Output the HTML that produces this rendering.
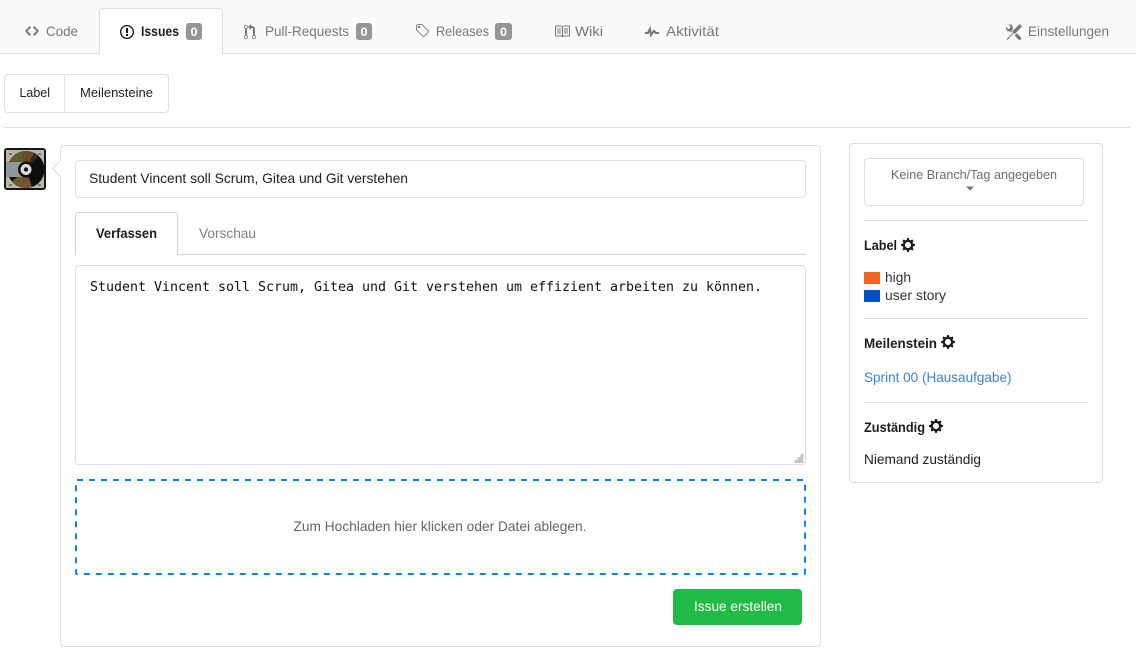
<!DOCTYPE html>
<html lang="de">
<head>
<meta charset="utf-8">
<title>Neues Issue</title>
<style>
html,body{margin:0;padding:0;background:#fff;width:1136px;height:658px;overflow:hidden}
svg{display:block;position:absolute;left:0;top:0}
text{font-family:"Liberation Sans",sans-serif;font-size:14px;fill:#212121}
.g{fill:#777}
.b{font-weight:bold;fill:#1b1c1d}
.mono{font-family:"DejaVu Sans Mono",monospace;font-size:13.33px;fill:#111}
</style>
</head>
<body>
<svg width="1136" height="658" viewBox="0 0 1136 658" xmlns="http://www.w3.org/2000/svg">
<defs>
<path id="gear" d="M14 8.77v-1.6l-1.94-.64-.45-1.09.88-1.84-1.13-1.13-1.81.91-1.09-.45-.69-1.92h-1.6l-.63 1.94-1.11.45-1.84-.88-1.13 1.13.91 1.81-.45 1.09L0 7.23v1.59l1.94.64.45 1.09-.88 1.84 1.13 1.13 1.81-.91 1.09.45.69 1.92h1.59l.63-1.94 1.11-.45 1.84.88 1.13-1.13-.92-1.81.47-1.09L14 8.75v.02zM7 11c-1.66 0-3-1.34-3-3s1.34-3 3-3 3 1.34 3 3-1.34 3-3 3z"/>
</defs>
<!-- tab bar -->
<rect x="0" y="0" width="1136" height="53" fill="#fafafa"/>
<rect x="0" y="53" width="1136" height="1" fill="#dedede"/>
<path d="M99.500 54V11.500a3 3 0 0 1 3-3h117a3 3 0 0 1 3 3V54" fill="#fff" stroke="#dedede"/>
<rect x="100" y="53" width="122" height="1" fill="#fff"/>

<path transform="translate(25 23)" fill="#767676" d="M9.5 3L8 4.5 11.5 8 8 11.5 9.5 13 14 8 9.5 3zm-5 0L0 8l4.5 5L6 11.5 2.5 8 6 4.5 4.5 3z"/>
<text class="g" x="46" y="36" textLength="32" lengthAdjust="spacingAndGlyphs">Code</text>

<path transform="translate(120 24)" fill="#111" d="M7 2.3c3.14 0 5.7 2.56 5.7 5.7s-2.56 5.7-5.7 5.7A5.71 5.71 0 0 1 1.3 8c0-3.14 2.56-5.7 5.7-5.700zM7 1C3.14 1 0 4.14 0 8s3.14 7 7 7 7-3.14 7-7-3.14-7-7-7zm1 3H6v5h2V4zm0 6H6v2h2v-2z"/>
<text class="b" x="141" y="36" textLength="38" lengthAdjust="spacingAndGlyphs">Issues</text>
<rect x="186" y="23" width="16" height="17" rx="3" fill="#969696"/>
<text x="190.500" y="36" style="font-size:12px;font-weight:bold;fill:#fff" textLength="7" lengthAdjust="spacingAndGlyphs">0</text>

<path transform="translate(244 24)" fill="#767676" d="M11 11.28V5c-.03-.78-.34-1.47-.94-2.06C9.46 2.35 8.78 2.03 8 2H7V0L4 3l3 3V4h1c.27.02.48.11.69.31.21.2.3.42.31.69v6.28A1.993 1.993 0 0 0 10 15a1.993 1.993 0 0 0 1-3.72zm-1 2.92c-.66 0-1.2-.55-1.2-1.2 0-.65.55-1.2 1.2-1.2.65 0 1.2.55 1.2 1.2 0 .65-.55 1.2-1.2 1.2zM4 3c0-1.11-.89-2-2-2a1.993 1.993 0 0 0-1 3.72v6.56A1.993 1.993 0 0 0 2 15a1.993 1.993 0 0 0 1-3.72V4.72c.59-.34 1-.98 1-1.72zm-.8 10c0 .66-.55 1.2-1.2 1.2-.65 0-1.2-.55-1.2-1.2 0-.65.55-1.2 1.2-1.2.65 0 1.2.55 1.2 1.2zM2 4.2C1.34 4.2.8 3.65.8 3c0-.65.55-1.2 1.2-1.2.65 0 1.2.55 1.2 1.2 0 .65-.55 1.2-1.2 1.2z"/>
<text class="g" x="265" y="36" textLength="84" lengthAdjust="spacingAndGlyphs">Pull-Requests</text>
<rect x="356" y="23" width="16" height="17" rx="3" fill="#969696"/>
<text x="360.500" y="36" style="font-size:12px;font-weight:bold;fill:#fff" textLength="7" lengthAdjust="spacingAndGlyphs">0</text>

<path transform="translate(415 23)" fill="#767676" d="M7.73 1.73C7.26 1.26 6.62 1 5.96 1H3.5C2.13 1 1 2.13 1 3.5v2.47c0 .66.27 1.3.73 1.77l6.06 6.06c.39.39 1.02.39 1.41 0l4.59-4.59a.996.996 0 0 0 0-1.41L7.73 1.73zM2.38 7.09c-.31-.3-.47-.7-.47-1.13V3.5c0-.88.72-1.59 1.59-1.59h2.47c.42 0 .83.16 1.13.47l6.14 6.13-4.73 4.73-6.13-6.15zM3.01 3h2v2H3V3h.01z"/>
<text class="g" x="436" y="36" textLength="53" lengthAdjust="spacingAndGlyphs">Releases</text>
<rect x="495" y="23" width="17" height="17" rx="3" fill="#969696"/>
<text x="500" y="36" style="font-size:12px;font-weight:bold;fill:#fff" textLength="7" lengthAdjust="spacingAndGlyphs">0</text>

<path transform="translate(554 23.500)" fill="#767676" d="M3 5h4v1H3V5zm0 3h4V7H3v1zm0 2h4V9H3v1zm11-5h-4v1h4V5zm0 2h-4v1h4V7zm0 2h-4v1h4V9zm2-6v9c0 .55-.45 1-1 1H9.5l-1 1-1-1H2c-.55 0-1-.45-1-1V3c0-.55.45-1 1-1h5.5l1 1 1-1H15c.55 0 1 .45 1 1zm-8 .5L7.5 3H2v9h6V3.5zm7-.5H9.5l-.5.5V12h6V3z"/>
<text class="g" x="575" y="36" textLength="28" lengthAdjust="spacingAndGlyphs">Wiki</text>

<path transform="translate(645 24)" fill="#767676" d="M11.5 8L8.8 5.4 6.6 8.5 5.5 1.6 2.38 8H0v2h3.6l.9-1.8.9 5.4L9 8.5l1.6 1.5H14V8h-2.5z"/>
<text class="g" x="666" y="36" textLength="53" lengthAdjust="spacingAndGlyphs">Aktivität</text>

<path transform="translate(1006 24)" fill="#767676" d="M4.48 7.27c.26.26 1.28 1.33 1.28 1.33l.56-.58-.88-.91 1.69-1.8s-.76-.74-.43-.45c.32-1.19.03-2.51-.87-3.44C4.93.5 3.66.2 2.52.51l1.93 2-.51 1.96-1.89.52-1.93-2C-.19 4.17.1 5.48 1 6.4c.94.98 2.29 1.26 3.48.87zm6.44 1.94l-2.33 2.3 3.84 3.98c.31.33.73.49 1.14.49.41 0 .82-.16 1.14-.49.63-.65.63-1.7 0-2.35l-3.79-3.93zM16 2.53L13.55 0 6.33 7.46l.88.91-4.31 4.46-.99.53-1.39 2.27.35.37 2.2-1.44.51-1.02L7.9 9.08l.88.91L16 2.53z"/>
<text class="g" x="1028" y="36" textLength="81" lengthAdjust="spacingAndGlyphs">Einstellungen</text>

<!-- label / milestones buttons -->
<rect x="4.500" y="74.500" width="164" height="38" rx="3.500" fill="#fff" stroke="#dedede"/>
<rect x="64" y="75" width="1" height="37" fill="#e4e4e4"/>
<text x="19.500" y="97" style="font-size:13px" textLength="30.500" lengthAdjust="spacingAndGlyphs">Label</text>
<text x="80" y="97" style="font-size:13px" textLength="73" lengthAdjust="spacingAndGlyphs">Meilensteine</text>

<rect x="4" y="127" width="1126" height="1" fill="#dedede"/>

<!-- avatar -->
<rect x="4" y="148" width="42" height="42" rx="3" fill="#161616"/>
<rect x="6" y="150" width="38" height="38" fill="#b8b5ad"/>
<g fill="#77746c"><rect x="9" y="153" width="3" height="2"/><rect x="38" y="153" width="3" height="2"/><rect x="9" y="184" width="3" height="2"/><rect x="38" y="184" width="3" height="2"/></g>
<circle cx="26" cy="169.500" r="18.500" fill="#0e0e0c"/>
<path d="M26 169.500L9.500 161A18.500 18.500 0 0 1 22 151.500z" fill="#5e5e2c"/>
<path d="M26 169.500L22 151.500A18.500 18.500 0 0 1 34 153z" fill="#6f4a28"/>
<path d="M26 169.500L34 153A18.500 18.500 0 0 1 38.500 156z" fill="#33291a"/>
<path d="M26 169.500L12 181.500A18.500 18.500 0 0 0 22 187.500z" fill="#6a5c30"/>
<path d="M26 169.500L22 187.500A18.500 18.500 0 0 0 32 187z" fill="#7c5036"/>
<rect x="6" y="162" width="21" height="15" fill="#8f979e"/>
<circle cx="26" cy="169.500" r="8" fill="#0b0b0b"/>
<circle cx="26" cy="169.500" r="5.500" fill="#dcdcdc"/>
<circle cx="26" cy="169.500" r="2.200" fill="#1a1a1a"/>

<!-- main panel -->
<rect x="60.500" y="145.500" width="760" height="501" rx="3.500" fill="#fff" stroke="#dedede"/>
<path d="M60.500 160.500L52.500 168.500L60.500 176.500" fill="#fff" stroke="#dedede"/>
<rect x="60" y="161" width="2" height="15" fill="#fff"/>

<rect x="75.500" y="160.500" width="730" height="37" rx="3.500" fill="#fff" stroke="#dedede"/>
<text x="89" y="183" textLength="319" lengthAdjust="spacingAndGlyphs">Student Vincent soll Scrum, Gitea und Git verstehen</text>

<rect x="75" y="254" width="731" height="1" fill="#d4d4d5"/>
<path d="M75.500 255V215.500a3 3 0 0 1 3-3h96a3 3 0 0 1 3 3V255" fill="#fff" stroke="#d4d4d5"/>
<rect x="76" y="254" width="101" height="1" fill="#fff"/>
<text class="b" x="96" y="238" textLength="61" lengthAdjust="spacingAndGlyphs">Verfassen</text>
<text x="199" y="238" style="fill:#808080" textLength="57" lengthAdjust="spacingAndGlyphs">Vorschau</text>

<rect x="75.500" y="265.500" width="730" height="199" rx="3.500" fill="#fff" stroke="#dedede"/>
<text class="mono" x="90" y="291" textLength="672" lengthAdjust="spacingAndGlyphs">Student Vincent soll Scrum, Gitea und Git verstehen um effizient arbeiten zu können.</text>
<g fill="#c4c4c4"><rect x="800.500" y="454" width="3" height="3"/><rect x="797.500" y="457" width="3" height="3"/><rect x="800.500" y="457" width="3" height="3"/><rect x="794.500" y="460" width="3" height="3"/><rect x="797.500" y="460" width="3" height="3"/><rect x="800.500" y="460" width="3" height="3"/></g>

<rect x="76" y="480" width="729" height="94" rx="1" fill="#fff" stroke="#0087f5" stroke-width="2" stroke-dasharray="6 6"/>
<text x="293.500" y="531" style="font-size:14px;fill:#646464" textLength="293" lengthAdjust="spacingAndGlyphs">Zum Hochladen hier klicken oder Datei ablegen.</text>

<rect x="673" y="589" width="129" height="36" rx="4" fill="#21ba45"/>
<text x="694" y="611" style="font-size:14px;fill:#fff" textLength="88" lengthAdjust="spacingAndGlyphs">Issue erstellen</text>

<!-- sidebar -->
<rect x="849.500" y="143.500" width="253" height="339" rx="3.500" fill="#fff" stroke="#dedede"/>
<rect x="864.500" y="158.500" width="219" height="47" rx="3.500" fill="#fff" stroke="#dedede"/>
<text x="891" y="179" style="font-size:13px;fill:#6e6e6e" textLength="166" lengthAdjust="spacingAndGlyphs">Keine Branch/Tag angegeben</text>
<path d="M966 186.500h8l-4 4z" fill="#707070"/>

<rect x="864" y="220" width="224" height="1" fill="#dedede"/>
<text class="b" x="864" y="250" textLength="33" lengthAdjust="spacingAndGlyphs">Label</text>
<use href="#gear" transform="translate(901 237)" fill="#1b1c1d"/>

<rect x="864" y="272" width="16" height="12" fill="#ee6723"/>
<text x="885" y="282" style="fill:#333" textLength="26" lengthAdjust="spacingAndGlyphs">high</text>
<rect x="864" y="290" width="16" height="12" fill="#0052cc"/>
<text x="885" y="300" style="fill:#333" textLength="61" lengthAdjust="spacingAndGlyphs">user story</text>

<rect x="864" y="318" width="224" height="1" fill="#dedede"/>
<text class="b" x="864" y="348" textLength="73" lengthAdjust="spacingAndGlyphs">Meilenstein</text>
<use href="#gear" transform="translate(941 334)" fill="#1b1c1d"/>

<text x="864" y="382" style="fill:#4183c4" textLength="147.500" lengthAdjust="spacingAndGlyphs">Sprint 00 (Hausaufgabe)</text>

<rect x="864" y="402" width="224" height="1" fill="#dedede"/>
<text class="b" x="864" y="432" textLength="61" lengthAdjust="spacingAndGlyphs">Zuständig</text>
<use href="#gear" transform="translate(929 418)" fill="#1b1c1d"/>

<text x="864" y="464" textLength="117" lengthAdjust="spacingAndGlyphs">Niemand zuständig</text>
</svg>
</body>
</html>
